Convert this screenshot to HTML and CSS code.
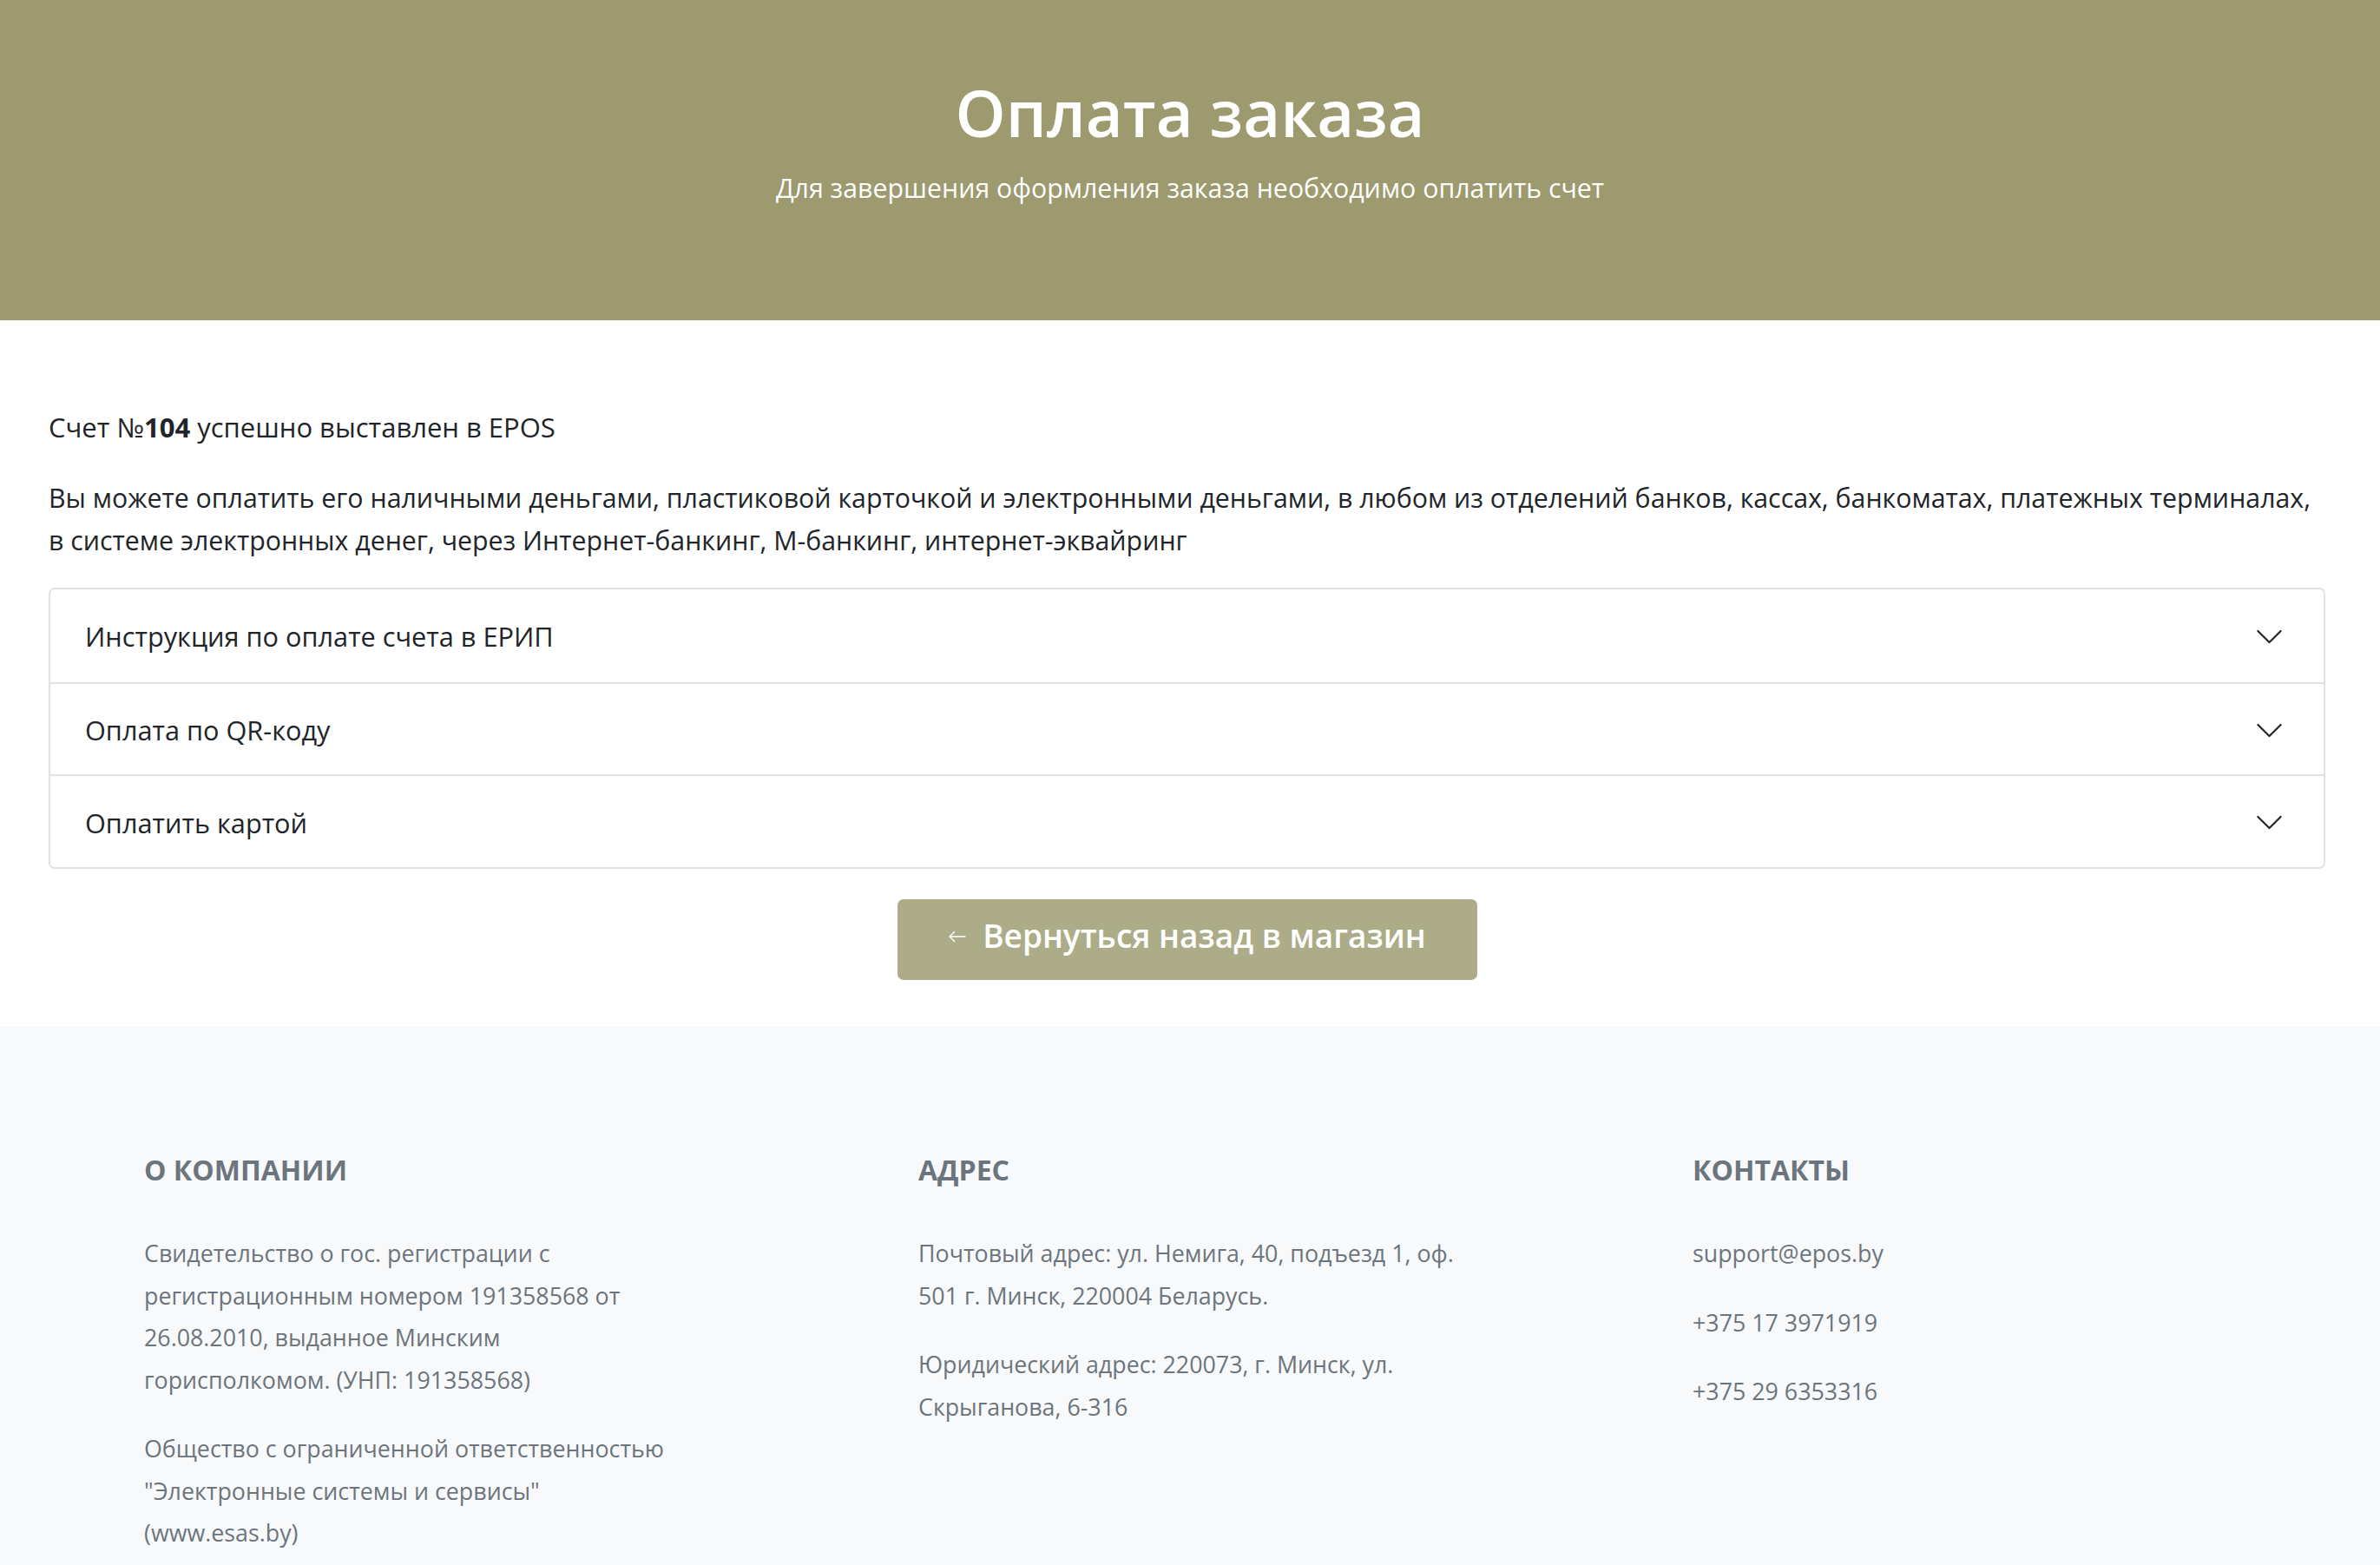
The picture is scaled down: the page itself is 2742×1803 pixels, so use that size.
FILE: index.html
```html
<!DOCTYPE html>
<html lang="ru">
<head>
<meta charset="utf-8">
<title>Оплата заказа</title>
<link rel="stylesheet" href="styles.css">
</head>
<body>
<header class="hero">
  <h1 class="hero-title">Оплата заказа</h1>
  <p class="hero-sub">Для завершения оформления заказа необходимо оплатить счет</p>
</header>
<main class="content">
  <p class="invoice">Счет №<b>104</b> успешно выставлен в EPOS</p>
  <p class="desc">Вы можете оплатить его наличными деньгами, пластиковой карточкой и электронными деньгами, в любом из отделений банков, кассах, банкоматах, платежных терминалах, в системе электронных денег, через Интернет-банкинг, М-банкинг, интернет-эквайринг</p>
  <div class="accordion">
    <div class="acc-item">
      <span class="acc-title">Инструкция по оплате счета в ЕРИП</span>
      <svg class="chev" viewBox="0 0 16 16"><path d="M1.646 4.646a.5.5 0 0 1 .708 0L8 10.293l5.646-5.647a.5.5 0 0 1 .708.708l-6 6a.5.5 0 0 1-.708 0l-6-6a.5.5 0 0 1 0-.708z"/></svg>
    </div>
    <div class="acc-item">
      <span class="acc-title">Оплата по QR-коду</span>
      <svg class="chev" viewBox="0 0 16 16"><path d="M1.646 4.646a.5.5 0 0 1 .708 0L8 10.293l5.646-5.647a.5.5 0 0 1 .708.708l-6 6a.5.5 0 0 1-.708 0l-6-6a.5.5 0 0 1 0-.708z"/></svg>
    </div>
    <div class="acc-item">
      <span class="acc-title">Оплатить картой</span>
      <svg class="chev" viewBox="0 0 16 16"><path d="M1.646 4.646a.5.5 0 0 1 .708 0L8 10.293l5.646-5.647a.5.5 0 0 1 .708.708l-6 6a.5.5 0 0 1-.708 0l-6-6a.5.5 0 0 1 0-.708z"/></svg>
    </div>
  </div>
  <div class="actions">
    <a class="btn-back" href="#">
      <svg class="arrow" viewBox="0 0 16 16"><path d="M15 8a.5.5 0 0 0-.5-.5H2.707l3.147-3.146a.5.5 0 1 0-.708-.708l-4 4a.5.5 0 0 0 0 .708l4 4a.5.5 0 0 0 .708-.708L2.707 8.5H14.5A.5.5 0 0 0 15 8z"/></svg>
      <span>Вернуться назад в магазин</span>
    </a>
  </div>
</main>
<footer class="footer">
  <div class="footer-grid">
    <section class="fcol">
      <h3 class="fhead">О компании</h3>
      <p>Свидетельство о гос. регистрации с регистрационным номером 191358568 от 26.08.2010, выданное Минским горисполкомом. (УНП: 191358568)</p>
      <p>Общество с ограниченной ответственностью "Электронные системы и сервисы" (www.esas.by)</p>
    </section>
    <section class="fcol">
      <h3 class="fhead">Адрес</h3>
      <p>Почтовый адрес: ул. Немига, 40, подъезд 1, оф. 501 г. Минск, 220004 Беларусь.</p>
      <p>Юридический адрес: 220073, г. Минск, ул. Скрыганова, 6-316</p>
    </section>
    <section class="fcol">
      <h3 class="fhead">Контакты</h3>
      <p>support@epos.by</p>
      <p>+375 17 3971919</p>
      <p>+375 29 6353316</p>
    </section>
  </div>
</footer>
</body>
</html>
```
FILE: styles.css
```css
body {
  margin: 0;
  font-family: "Open Sans", "Noto Sans", sans-serif;
  color: #212529;
  background: #fff;
}

.hero {
  background: #9c9a6e;
  height: 369px;
  box-sizing: border-box;
  padding-top: 86px;
  text-align: center;
  color: #fff;
}

.hero-title {
  margin: 0;
  font-size: 74px;
  font-weight: 600;
  line-height: 88px;
}

.hero-sub {
  margin: 23px 0 0;
  font-size: 30.3px;
  line-height: 40px;
}

.content {
  padding: 99px 63px 54px 56px;
}

.invoice {
  margin: 0;
  font-size: 31px;
  line-height: 49px;
}

.invoice b {
  font-weight: 700;
}

.desc {
  margin: 32px 0 0;
  font-size: 30.3px;
  line-height: 49px;
}

.accordion {
  margin-top: 30px;
  border: 2px solid #dee2e6;
  border-radius: 7px;
}

.acc-item {
  display: flex;
  align-items: center;
  justify-content: space-between;
  padding: 2px 45px 0 40px;
  box-sizing: border-box;
  height: 106.7px;
  font-size: 30.7px;
}

.acc-item + .acc-item {
  border-top: 2px solid #dee2e6;
}

.chev {
  width: 35px;
  height: 35px;
  fill: #212529;
}

.actions {
  display: flex;
  justify-content: center;
  margin-top: 35px;
}

.btn-back {
  display: flex;
  align-items: center;
  justify-content: center;
  gap: 18px;
  width: 668px;
  height: 93px;
  padding-bottom: 11px;
  box-sizing: border-box;
  background: #adac88;
  color: #fff;
  text-decoration: none;
  border-radius: 7px;
  font-size: 37px;
  font-weight: 600;
}

.arrow {
  width: 22px;
  height: 22px;
  fill: #fff;
  margin-top: 4px;
}

.footer {
  background: #f8f9fa;
  padding: 147px 0 60px 166px;
  color: #6c757d;
}

.footer-grid {
  display: grid;
  grid-template-columns: 892px 892px 892px;
}

.fhead {
  margin: 0 0 54px;
  font-size: 32px;
  line-height: 36px;
  font-weight: 700;
  text-transform: uppercase;
  color: #6c757d;
}

.fcol p {
  margin: 0 0 31px;
  font-size: 26.8px;
  line-height: 48.5px;
  max-width: 625px;
}
```
